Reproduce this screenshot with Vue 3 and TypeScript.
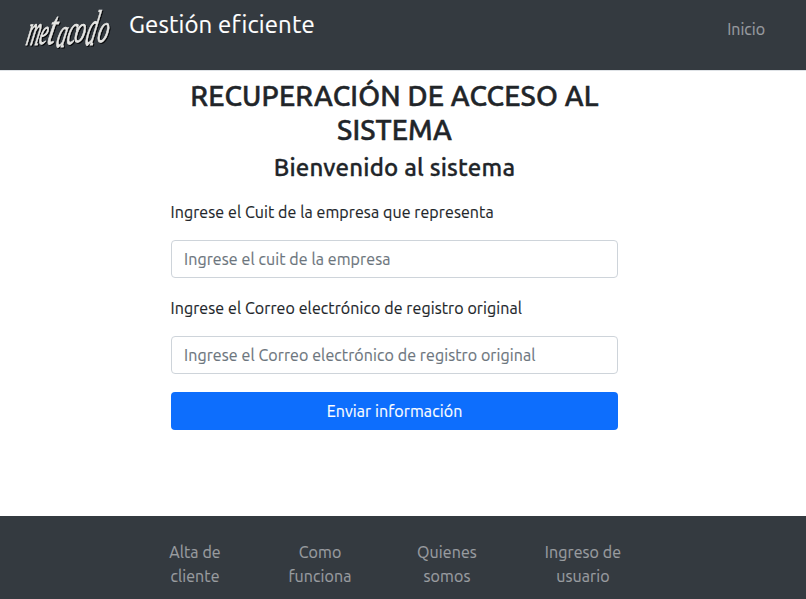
<script setup lang="ts">
import { ref } from 'vue'

interface FooterLink {
  lines: string[]
  kind: string
}

interface Glyph {
  char: string
  x: number
  y: number
  size: number
  sx: number
}

const cuit = ref('')
const correo = ref('')

const links: FooterLink[] = [
  { lines: ['Alta de', 'cliente'], kind: 'alta' },
  { lines: ['Como', 'funciona'], kind: 'como' },
  { lines: ['Quienes', 'somos'], kind: 'quienes' },
  { lines: ['Ingreso de', 'usuario'], kind: 'ingreso' },
]

const wordmark: Glyph[] = [
  { char: 'm', x: 1, y: 45, size: 44, sx: 0.42 },
  { char: 'e', x: 14, y: 44, size: 36, sx: 0.5 },
  { char: 't', x: 22, y: 44, size: 48, sx: 0.58 },
  { char: 'a', x: 31, y: 47, size: 42, sx: 0.46 },
  { char: 'c', x: 41.5, y: 44, size: 42, sx: 0.48 },
  { char: 'o', x: 49, y: 42, size: 38, sx: 0.56 },
  { char: 'd', x: 60, y: 45, size: 50, sx: 0.4 },
  { char: 'o', x: 72, y: 42, size: 40, sx: 0.54 },
]
</script>

<template>
  <div class="page">
    <header class="navbar">
      <svg class="logo" viewBox="0 0 90 60" role="img" aria-label="metacodo">
        <text v-for="(g, i) in wordmark" :key="i" :font-size="g.size"
          :transform="`translate(${g.x} ${g.y}) skewX(-13) scale(${g.sx} 1)`">{{ g.char }}</text>
      </svg>
      <span class="brand">Gestión eficiente</span>
      <a class="nav-link">Inicio</a>
    </header>

    <main class="content">
      <h1>RECUPERACIÓN DE ACCESO AL<br />SISTEMA</h1>
      <h2>Bienvenido al sistema</h2>
      <form @submit.prevent>
        <label for="cuit">Ingrese el Cuit de la empresa que representa</label>
        <input id="cuit" v-model="cuit" type="text" placeholder="Ingrese el cuit de la empresa" />
        <label for="correo">Ingrese el Correo electrónico de registro original</label>
        <input id="correo" v-model="correo" type="text" placeholder="Ingrese el Correo electrónico de registro original" />
        <button type="submit">Enviar información</button>
      </form>
    </main>

    <footer class="footer">
      <a v-for="link in links" :key="link.kind" :class="link.kind">
        <span v-for="line in link.lines" :key="line">{{ line }}</span>
      </a>
    </footer>
  </div>
</template>

<style>
body {
  margin: 0;
  overflow: hidden;
}
</style>

<style scoped>
.page {
  display: flex;
  flex-direction: column;
  height: 599px;
  box-sizing: border-box;
  background: #fff;
  color: #212529;
  font-family: Ubuntu, "Noto Sans", sans-serif;
  font-size: 16px;
  letter-spacing: 0.09px;
  line-height: 24px;
  -webkit-text-stroke: 0.15px currentColor;
}
.navbar {
  display: flex;
  align-items: flex-start;
  height: 70px;
  flex: none;
  background: #343a40;
  border-bottom: 1px solid #dee2e6;
}
.logo {
  width: 90px;
  height: 60px;
  margin-left: 24px;
  flex: none;
  overflow: visible;
  filter: drop-shadow(1.5px 1.5px 0.5px #08090b);
}
.logo text {
  fill: #e6e6e4;
  stroke: #e6e6e4;
  stroke-width: 0.9;
  font-family: "Liberation Serif", serif;
  font-style: italic;
  letter-spacing: 0;
}
.brand {
  margin: 7px 0 0 15px;
  color: #fff;
  font-size: 24px;
  letter-spacing: 0.12px;
  line-height: 36px;
  white-space: nowrap;
}
.nav-link {
  margin: 17px 41px 0 auto;
  color: #9a9da0;
  letter-spacing: 0;
}
.content {
  width: 447px;
  height: 445px;
  flex: none;
  margin-left: 171px;
}
h1,
h2 {
  margin: 0;
  font-weight: 500;
  text-align: center;
  white-space: nowrap;
}
h1 {
  padding-top: 8px;
  font-size: 28px;
  letter-spacing: 0.18px;
  line-height: 34px;
  -webkit-text-stroke: 0.5px currentColor;
}
h2 {
  margin-top: 6px;
  font-size: 24px;
  letter-spacing: 0.18px;
  line-height: 29px;
  -webkit-text-stroke: 0.3px currentColor;
}
form {
  display: flex;
  flex-direction: column;
  margin-top: 18px;
}
label {
  align-self: flex-start;
  margin: 0 0 16px -0.5px;
  white-space: nowrap;
}
input {
  box-sizing: border-box;
  height: 38px;
  width: 100%;
  margin: 0 0 18px;
  padding: 6px 12px;
  border: 1px solid #ced4da;
  border-radius: 4px;
  font: inherit;
  letter-spacing: inherit;
  color: #212529;
  outline: none;
}
input::placeholder {
  color: #6c757d;
  opacity: 1;
}
button {
  height: 38px;
  border: 0;
  border-radius: 4px;
  background: #0d6efd;
  color: #fff;
  font: inherit;
  letter-spacing: inherit;
}
.footer {
  display: flex;
  flex: 1;
  padding: 24px 0 0 145px;
  background: #343a40;
  color: #9a9da0;
}
.footer a {
  display: flex;
  flex-direction: column;
  align-items: center;
  white-space: nowrap;
}
.alta { width: 100px; }
.como { width: 150px; }
.quienes { width: 104px; }
.ingreso { width: 168px; }
</style>
